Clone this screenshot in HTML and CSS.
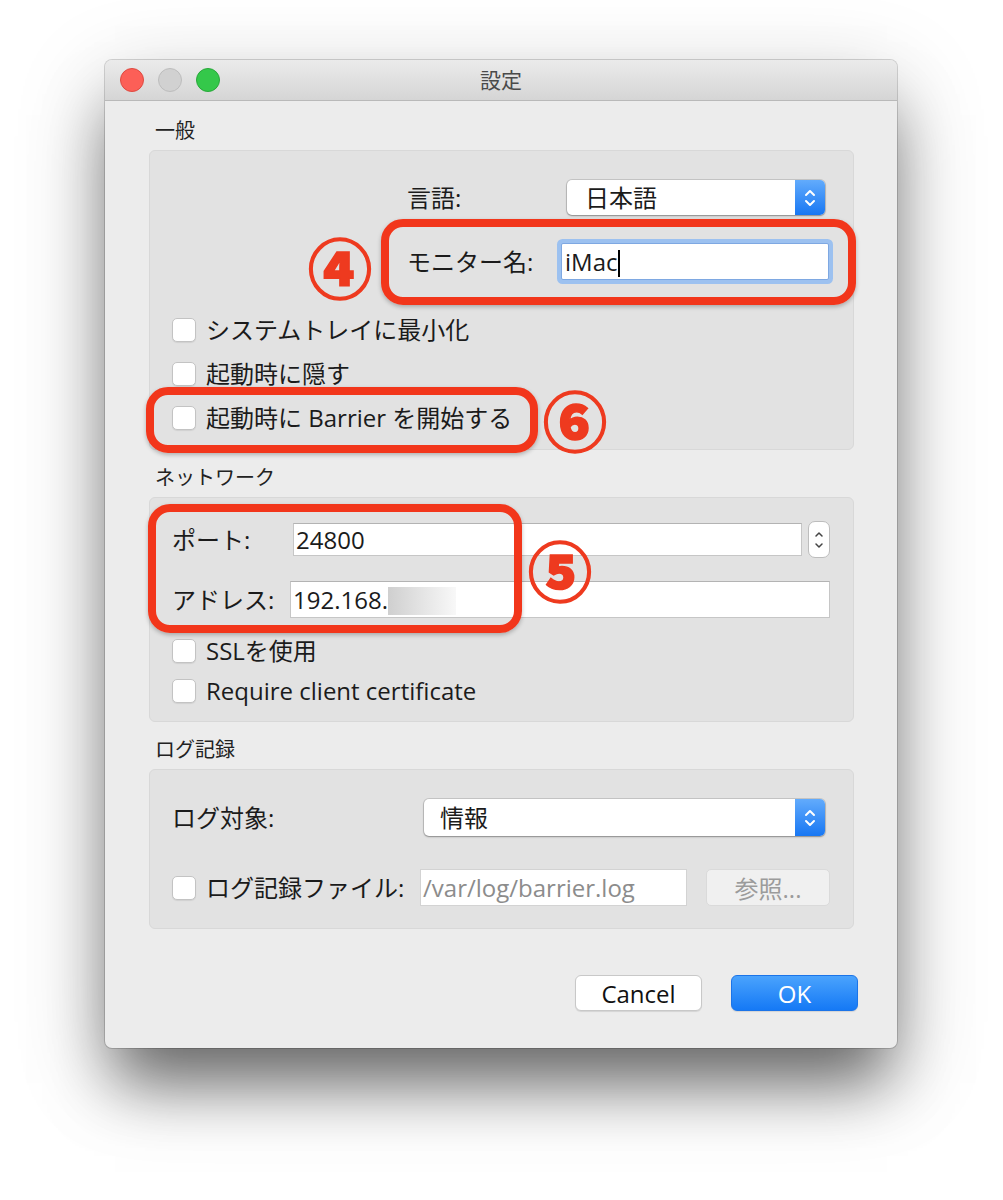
FILE: index.html
```html
<!doctype html>
<html lang="ja">
<head>
  <meta charset="utf-8">
  <title>設定</title>
  <link rel="stylesheet" href="styles.css">
</head>
<body>
  <div class="window">
    <div class="titlebar">
      <div class="lights">
        <span class="light light-red"></span>
        <span class="light light-gray"></span>
        <span class="light light-green"></span>
      </div>
      <div class="title">設定</div>
      <div></div>
    </div>

    <div class="content">
      <!-- general -->
      <div class="section-label">一般</div>
      <div class="group group-general">
        <div class="general-form">
          <span class="field-label">言語:</span>
          <div class="popup popup-lang">
            <span class="popup-text">日本語</span>
            <span class="popup-arrows">
              <svg width="14" height="22" viewBox="0 0 14 22"><path d="M3 8 L7 4 L11 8 M3 14 L7 18 L11 14" fill="none" stroke="#fff" stroke-width="2" stroke-linecap="round" stroke-linejoin="round"/></svg>
            </span>
          </div>
          <span class="field-label">モニター名:</span>
          <div class="textfield textfield-focus">iMac<span class="caret"></span></div>
        </div>
        <div class="check-list check-list-general">
          <label class="check"><span class="box"></span>システムトレイに最小化</label>
          <label class="check"><span class="box"></span>起動時に隠す</label>
          <label class="check"><span class="box"></span>起動時に Barrier を開始する</label>
        </div>
      </div>

      <!-- network -->
      <div class="section-label next">ネットワーク</div>
      <div class="group group-network">
        <div class="net-row">
          <span class="net-label">ポート:</span>
          <div class="textfield port-field">24800</div>
          <span class="stepper">
            <svg width="10" height="30" viewBox="0 0 10 30"><path d="M2 11 L5 8 L8 11 M2 19 L5 22 L8 19" fill="none" stroke="#444" stroke-width="1.5" stroke-linecap="round" stroke-linejoin="round"/></svg>
          </span>
        </div>
        <div class="net-row address-row">
          <span class="net-label">アドレス:</span>
          <div class="textfield address-field">192.168.<span class="blurred"></span></div>
        </div>
        <label class="check ssl-check"><span class="box"></span>SSLを使用</label>
        <label class="check cert-check"><span class="box"></span>Require client certificate</label>
      </div>

      <!-- logging -->
      <div class="section-label next">ログ記録</div>
      <div class="group group-log">
        <div class="log-row">
          <span class="log-label">ログ対象:</span>
          <div class="popup popup-level">
            <span class="popup-text">情報</span>
            <span class="popup-arrows">
              <svg width="14" height="22" viewBox="0 0 14 22"><path d="M3 8 L7 4 L11 8 M3 14 L7 18 L11 14" fill="none" stroke="#fff" stroke-width="2" stroke-linecap="round" stroke-linejoin="round"/></svg>
            </span>
          </div>
        </div>
        <div class="log-row file-row">
          <label class="check file-check"><span class="box"></span>ログ記録ファイル:</label>
          <div class="textfield file-field">/var/log/barrier.log</div>
          <button type="button" class="browse-button">参照...</button>
        </div>
      </div>

      <div class="buttons">
        <button type="button" class="push-button">Cancel</button>
        <button type="button" class="push-button default-button">OK</button>
      </div>
    </div>

    <!-- annotations -->
    <div class="mark mark-name"></div>
    <div class="mark mark-start"></div>
    <div class="mark mark-net"></div>
    <span class="num num-4">④</span>
    <span class="num num-5">⑤</span>
    <span class="num num-6">⑥</span>
  </div>
</body>
</html>
```

FILE: styles.css
```css
body {
  margin: 0;
  background: #ffffff;
  font-family: "Open Sans", "Noto Sans CJK JP", sans-serif;
  color: #1b1b1b;
}

.window {
  position: relative;
  width: 792px;
  margin: 60px 0 151px 105px;
  background: #ececec;
  border-radius: 7px;
  box-shadow: 0 0 0 1px rgba(0, 0, 0, 0.16),
              0 45px 60px -10px rgba(0, 0, 0, 0.5),
              0 25px 90px rgba(0, 0, 0, 0.22);
}

/* title bar */
.titlebar {
  height: 40px;
  display: grid;
  grid-template-columns: 1fr auto 1fr;
  align-items: center;
  background: linear-gradient(#ebebeb, #d5d5d5);
  border-bottom: 1px solid #b9b9b9;
  border-radius: 7px 7px 0 0;
}

.lights {
  display: flex;
  gap: 14px;
  padding-left: 15px;
}

.light {
  width: 22px;
  height: 22px;
  border-radius: 50%;
  border: 1px solid transparent;
}

.light-red { background: #fc5f57; border-color: #de4a41; }
.light-gray { background: #d1d1d1; border-color: #bdbdbd; }
.light-green { background: #34c84a; border-color: #29a83a; }

.title {
  font-size: 21px;
  line-height: 40px;
  color: #4a4a4a;
}

/* content */
.content {
  padding: 16px 43px 37px 44px;
}

.section-label {
  font-size: 20px;
  line-height: 28px;
  margin: 0 0 5px 6px;
  color: #222;
}

.section-label.next {
  margin-top: 14px;
}

.group {
  background: #e2e2e2;
  border: 1px solid #d8d8d8;
  border-radius: 6px;
  font-size: 24px;
}

.group-general {
  padding: 29px 24px 13px 22px;
}

.general-form {
  display: grid;
  grid-template-columns: 160px 258px;
  grid-template-rows: 35px 37px;
  row-gap: 28px;
  align-items: center;
  margin-left: 235px;
}

.field-label {
  line-height: 30px;
}

/* popup buttons */
.popup {
  display: flex;
  align-items: center;
  height: 35px;
  background: #fff;
  border-radius: 5px;
  box-shadow: 0 0 0 1px rgba(0, 0, 0, 0.12), 0 1px 2px rgba(0, 0, 0, 0.3);
}

.popup-text {
  flex: 1;
  padding-left: 18px;
  line-height: 30px;
}

.popup-arrows {
  width: 30px;
  height: 100%;
  display: flex;
  align-items: center;
  justify-content: center;
  background: linear-gradient(#62abfc, #1877f3);
  border-radius: 0 5px 5px 0;
}

.popup-level {
  flex: 1;
  height: 37px;
  margin-right: 5px;
}

.popup-level .popup-text {
  padding-left: 16px;
}

/* text fields */
.textfield {
  height: 33px;
  box-sizing: border-box;
  background: #fff;
  border: 1px solid #c6c6c6;
  border-top-color: #b3b3b3;
  padding-left: 3px;
  line-height: 31px;
  white-space: nowrap;
  overflow: hidden;
}

.textfield-focus {
  width: 268px;
  height: 37px;
  margin-left: -6px;
  line-height: 35px;
  border-color: #7ea8e2;
  border-radius: 2px;
  box-shadow: 0 0 0 4px #9cc1f0;
}

.caret {
  display: inline-block;
  width: 2px;
  height: 27px;
  margin-left: 1px;
  background: #000;
  vertical-align: -6px;
}

/* checkboxes */
.check {
  display: flex;
  align-items: center;
  gap: 10px;
  height: 36px;
  line-height: 30px;
}

.box {
  width: 24px;
  height: 24px;
  box-sizing: border-box;
  background: #fff;
  border: 1px solid #c3c3c3;
  border-radius: 5px;
  box-shadow: 0 1px 1px rgba(0, 0, 0, 0.08);
  flex: none;
}

.check-list {
  display: flex;
  flex-direction: column;
  gap: 8px;
}

.check-list-general {
  margin-top: 32px;
}

/* network */
.group-network {
  padding: 23px 23px 12px 22px;
}

.net-row {
  display: flex;
  align-items: center;
  height: 37px;
}

.net-label {
  width: 118px;
  flex: none;
  line-height: 30px;
}

.port-field {
  flex: 1;
  margin-left: 3px;
  padding-left: 2px;
}

.stepper {
  width: 22px;
  height: 37px;
  box-sizing: border-box;
  margin-left: 6px;
  display: flex;
  align-items: center;
  justify-content: center;
  background: #fff;
  border: 1px solid #bdbdbd;
  border-radius: 7px;
}

.address-row {
  margin-top: 23px;
}

.address-field {
  flex: 1;
  height: 37px;
  line-height: 35px;
  padding-left: 2px;
}

.blurred {
  display: inline-block;
  width: 68px;
  height: 28px;
  vertical-align: -6px;
  background: linear-gradient(90deg, #cfcfcf, #e4e4e4 50%, #f8f8f8);
}

.ssl-check {
  margin-top: 15px;
}

.cert-check {
  margin-top: 4px;
}

/* logging */
.group-log {
  padding: 29px 23px 22px 22px;
}

.log-row {
  display: flex;
  align-items: center;
  height: 37px;
}

.log-label {
  width: 252px;
  flex: none;
  line-height: 30px;
}

.file-row {
  margin-top: 33px;
}

.file-check {
  width: 248px;
  flex: none;
}

.file-field {
  width: 267px;
  height: 37px;
  line-height: 35px;
  color: #8c8c8c;
  border-color: #d3d3d3;
  padding-left: 2px;
}

.browse-button {
  width: 124px;
  height: 37px;
  margin-left: 19px;
  background: #f0f0f0;
  border: 1px solid #dadada;
  border-radius: 5px;
  font: inherit;
  color: #9b9b9b;
  padding: 0;
}

/* dialog buttons */
.buttons {
  display: flex;
  justify-content: flex-end;
  gap: 29px;
  margin-top: 46px;
  margin-right: -4px;
}

.push-button {
  width: 127px;
  height: 36px;
  padding: 0;
  font-family: "Open Sans", sans-serif;
  font-size: 24px;
  color: #111;
  background: #fff;
  border: 1px solid #c8c8c8;
  border-radius: 6px;
  box-shadow: 0 1px 1px rgba(0, 0, 0, 0.1);
}

.default-button {
  color: #fff;
  background: linear-gradient(#4aa3fd, #1579f5);
  border-color: #1b74e8;
}

/* red annotations */
.mark {
  position: absolute;
  box-sizing: border-box;
  border: 8px solid #f2361b;
  border-radius: 22px;
  box-shadow: 0 2px 4px rgba(0, 0, 0, 0.25);
}

.mark-name { left: 276px; top: 159px; width: 475px; height: 86px; }
.mark-start { left: 41px; top: 327px; width: 392px; height: 66px; }
.mark-net { left: 43px; top: 444px; width: 374px; height: 129px; }

.num {
  position: absolute;
  width: 70px;
  height: 70px;
  font-family: "Noto Sans CJK JP", sans-serif;
  font-weight: 900;
  font-size: 64px;
  line-height: 70px;
  text-align: center;
  color: #ee3a1f;
  -webkit-text-stroke: 1.5px #ee3a1f;
}

.num-4 { left: 200px; top: 170px; }
.num-5 { left: 420px; top: 473px; }
.num-6 { left: 435px; top: 323px; }
```
